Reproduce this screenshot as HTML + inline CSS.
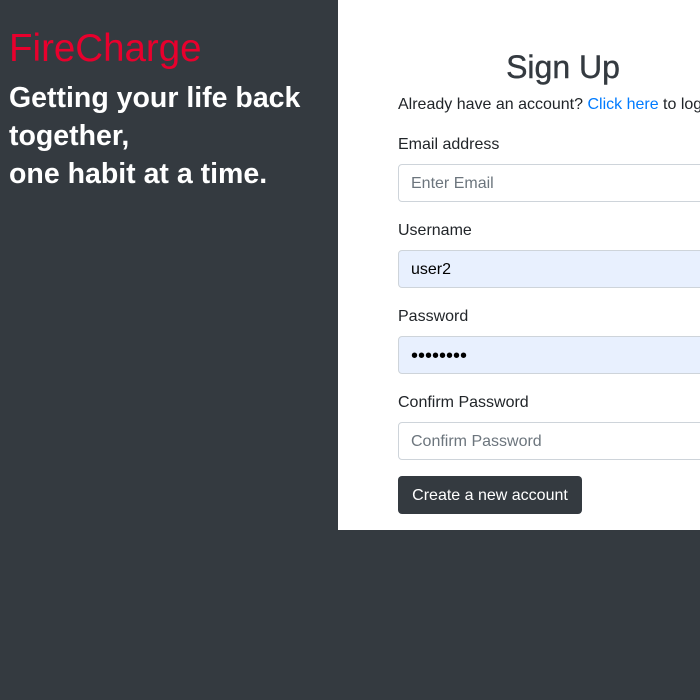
<!DOCTYPE html>
<html><head><style>
body{margin:0;width:700px;height:700px;background:#343a40;font-family:"Liberation Sans",sans-serif;position:relative;overflow:hidden}
.a{position:absolute;white-space:nowrap}
.brand{left:9px;top:26px;font-size:38.5px;color:#e8002d;line-height:46px}
.tag{left:9px;top:79px;font-size:28.5px;color:#fff;font-weight:bold;line-height:38px;white-space:normal;width:320px}
.panel{position:absolute;left:338px;top:0;width:362px;height:530px;background:#fff}
h1{position:absolute;left:468px;top:47px;margin:0;font-size:32px;font-weight:normal;color:#343a40;width:190px;text-align:center;line-height:40px;-webkit-text-stroke:0.4px #343a40}
.t{font-size:16px;color:#212529;left:398px}
.in{position:absolute;left:398px;width:320px;height:36px;border:1px solid #ced4da;border-radius:4px;font-size:16px;line-height:38px;padding-left:12px;box-sizing:content-box}
.ph{color:#6c757d}
.f{background:#e8f0fe;color:#000}
.btn{position:absolute;left:398px;top:476px;width:184px;height:38px;background:#343a40;color:#fff;border-radius:4px;font-size:16px;line-height:39px;text-align:center}
</style></head><body>
<div class="a brand">FireCharge</div>
<div class="a tag">Getting your life back together,<br>one habit at a time.</div>
<div class="panel"></div>
<h1>Sign Up</h1>
<div class="a t" style="top:96px">Already have an account? <span style="color:#007bff">Click here</span> to login</div>
<div class="a t" style="top:136px">Email address</div>
<div class="in ph" style="top:164px">Enter Email</div>
<div class="a t" style="top:222px">Username</div>
<div class="in f" style="top:250px">user2</div>
<div class="a t" style="top:308px">Password</div>
<div class="in f" style="top:336px;font-size:20px">••••••••</div>
<div class="a t" style="top:394px">Confirm Password</div>
<div class="in ph" style="top:422px">Confirm Password</div>
<div class="btn">Create a new account</div>
</body></html>
